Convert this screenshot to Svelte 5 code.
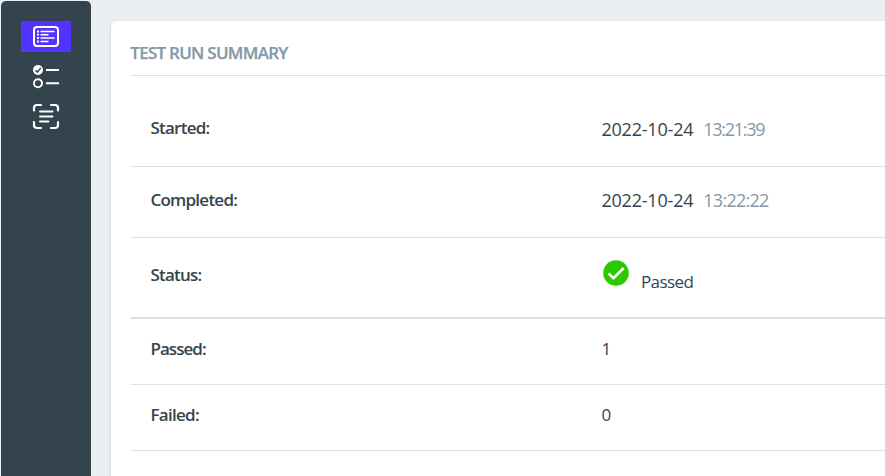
<script>
  const rows = [
    { key: 'started', label: 'Started:', date: '2022-10-24', time: '13:21:39' },
    { key: 'completed', label: 'Completed:', date: '2022-10-24', time: '13:22:22' },
    { key: 'status', label: 'Status:', status: 'Passed' },
    { key: 'passed', label: 'Passed:', value: '1' },
    { key: 'failed', label: 'Failed:', value: '0' }
  ];
</script>

<div class="app">
  <nav class="sidebar">
    <button class="item active" aria-label="Summary">
      <svg width="28" height="22" viewBox="0 0 28 22" fill="none" stroke="#fff">
        <rect x="2" y="1" width="24" height="19" rx="3" stroke-width="2" />
        <path d="M5 5.500h2M5 8.700h2M5 12h2M5 15.500h2" stroke-width="1.800" />
        <path d="M8.500 5.500h14M8.500 8.700h8M8.500 12h14M8.500 15.500h8" stroke-width="1.500" />
      </svg>
    </button>
    <button class="item" aria-label="Tests">
      <svg width="28" height="24" viewBox="0 0 28 24" fill="none">
        <circle cx="6" cy="5" r="5" fill="#fff" />
        <path d="M3.500 5.200l1.900 1.900L8.800 2.900" stroke="#34444e" stroke-width="1.500" />
        <circle cx="6" cy="18.300" r="4" stroke="#fff" stroke-width="1.900" />
        <path d="M14 5h13M14 18.300h13" stroke="#fff" stroke-width="1.900" />
      </svg>
    </button>
    <button class="item" aria-label="Logs">
      <svg width="28" height="27" viewBox="0 0 28 27" fill="none" stroke="#fff" stroke-width="2.200" stroke-linecap="round">
        <path d="M2 7.500V5a3 3 0 0 1 3-3h4M19 2h4a3 3 0 0 1 3 3v2.500M26 19v3a3 3 0 0 1-3 3h-4M9 25H5a3 3 0 0 1-3-3v-3" />
        <path d="M8 8.500h12.500M8 13.500h12.500M8 18.500h8.500" stroke-width="1.900" />
      </svg>
    </button>
  </nav>

  <main class="card">
    <h1><span>TEST RUN SUMMARY</span></h1>
    <dl>
      {#each rows as row}
        <div class="row {row.key}">
          <dt><span>{row.label}</span></dt>
          <dd>
            {#if row.date}
              <span class="date">{row.date}</span><span class="time">{row.time}</span>
            {:else if row.status}
              <svg class="check" width="26" height="26" viewBox="0 0 26 26">
                <circle cx="13" cy="13" r="12.800" fill="#2dc900" />
                <path d="M5.500 13.400l5 4.800L20.700 8" fill="none" stroke="#fff" stroke-width="2.600" />
              </svg>
              <span class="state">{row.status}</span>
            {:else}
              <span class="count">{row.value}</span>
            {/if}
          </dd>
        </div>
      {/each}
    </dl>
  </main>
</div>

<style>
  :global(body) {
    background: #ebeff2;
    overflow: hidden;
  }
  .app {
    display: flex;
    gap: 20px;
    width: 885px;
    height: 476px;
    padding: 1px 0 0 1px;
    box-sizing: border-box;
    overflow: hidden;
    background: #ebeff2;
    color: #34444e;
    font-family: "Open Sans", "Noto Sans", sans-serif;
  }
  .sidebar {
    width: 90px;
    flex: none;
    box-sizing: border-box;
    padding-top: 20px;
    border-radius: 5px 5px 0 0;
    background: #34444e;
    display: flex;
    flex-direction: column;
    align-items: center;
    gap: 9px;
  }
  .item {
    display: flex;
    align-items: center;
    justify-content: center;
    width: 50px;
    height: 31px;
    padding: 0;
    border: 0;
    background: none;
  }
  .item.active {
    background: #5333ff;
  }
  .card {
    flex: 1;
    min-width: 0;
    box-sizing: border-box;
    margin-top: 20px;
    padding-left: 20px;
    border-radius: 5px 0 0 0;
    background: #fff;
    box-shadow: 0 1px 3px rgba(0, 0, 0, 0.16);
  }
  h1 {
    box-sizing: border-box;
    height: 55px;
    margin: 0;
    padding-top: 20px;
    border-bottom: 1px solid #dedfe0;
    color: #8499a5;
    font-size: 17px;
    line-height: 24px;
    font-weight: 600;
    letter-spacing: -0.740px;
    text-indent: -0.700px;
    white-space: nowrap;
    -webkit-text-stroke: 0.250px #8499a5;
  }
  dl {
    margin: 0;
    padding-top: 15px;
  }
  .row {
    display: grid;
    grid-template-columns: 451px 1fr;
    align-items: center;
    box-sizing: border-box;
    padding-left: 19.400px;
    border-bottom: 1px solid #dedfe0;
    white-space: nowrap;
  }
  .started { height: 76px; padding-bottom: 1px; }
  .completed { height: 71px; padding-bottom: 4px; }
  .status { height: 81px; padding-bottom: 4px; border-bottom-width: 2px; }
  .passed, .failed { height: 66px; padding-bottom: 5px; }
  dt {
    font-size: 17px;
    line-height: 24px;
    font-weight: 600;
    letter-spacing: -0.750px;
  }
  .status dt { margin-top: -2px; }
  .passed dt { letter-spacing: -0.950px; }
  .failed dt { letter-spacing: -0.700px; }
  dd {
    display: flex;
    align-items: center;
    margin: 0;
    font-size: 17px;
    line-height: 24px;
  }
  .date, .time {
    font-size: 18px;
  }
  .started dd { padding-top: 1px; }
  .date {
    letter-spacing: -0.200px;
  }
  .time {
    margin-left: 10px;
    color: #8499a5;
  }
  .started .time { letter-spacing: -1.300px; }
  .completed .time { letter-spacing: -0.750px; }
  .check {
    margin: 0 12px 6px 1.600px;
  }
  .state {
    padding-top: 12px;
    letter-spacing: -0.600px;
  }
</style>
